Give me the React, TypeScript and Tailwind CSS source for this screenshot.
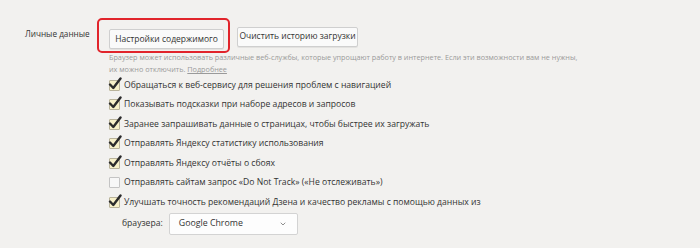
import { ChevronDown } from "lucide-react";

const options = [
  { label: "Обращаться к веб-сервису для решения проблем с навигацией", checked: true },
  { label: "Показывать подсказки при наборе адресов и запросов", checked: true },
  { label: "Заранее запрашивать данные о страницах, чтобы быстрее их загружать", checked: true },
  { label: "Отправлять Яндексу статистику использования", checked: true },
  { label: "Отправлять Яндексу отчёты о сбоях", checked: true },
  { label: "Отправлять сайтам запрос «Do Not Track» («Не отслеживать»)", checked: false },
  { label: "Улучшать точность рекомендаций Дзена и качество рекламы с помощью данных из", checked: true },
];

function Checkbox({ checked }: { checked: boolean }) {
  return (
    <span className="relative w-[11px] h-[11px] shrink-0">
      <span
        className={
          checked
            ? "absolute inset-0 border border-[#b9b39a] bg-[#f7f0c8] rounded-[1px]"
            : "absolute inset-0 border border-[#c4c4c4] bg-[#f7f7f7] rounded-[1px]"
        }
      />
      {checked && (
        <svg viewBox="0 0 14 14" className="absolute -left-[1px] -top-[3px] w-[14px] h-[14px]">
          <path d="M2 7.5 L5.3 11 L12.5 1.5" fill="none" stroke="#2b2b2b" strokeWidth="2.4" strokeLinecap="round" strokeLinejoin="round" />
        </svg>
      )}
    </span>
  );
}

export default function App() {
  return (
    <div className="w-[700px] h-[248px] bg-[#f2f1ef] text-[#333] font-['Open_Sans',sans-serif] flex overflow-hidden">
      <div className="w-[109px] shrink-0 pl-[25px] pt-[28px] text-[8.2px] leading-[12px] text-[#333]">Личные данные</div>
      <div className="flex-1 pt-[24px]">
        <div className="flex items-center gap-[13px]">
          <div className="relative">
            <span className="absolute -left-[12px] -top-[6px] -right-[6px] -bottom-[4px] border-2 border-[#e1242b] rounded-[5px]" />
            <button className="h-[20px] w-[115px] bg-[#fafafa] border border-[#cfcfcf] rounded-[2px] text-[8.5px] text-[#333] shadow-[0_1px_0_rgba(0,0,0,0.06)]">
              Настройки содержимого
            </button>
          </div>
          <button className="h-[20px] w-[121px] bg-[#fafafa] border border-[#cfcfcf] rounded-[2px] text-[8.5px] text-[#333] shadow-[0_1px_0_rgba(0,0,0,0.06)]">
            Очистить историю загрузки
          </button>
        </div>
        <div className="mt-[2px] text-[7.25px] leading-[12px] text-[#9a9a9a] w-[500px]">
          Браузер может использовать различные веб-службы, которые упрощают работу в интернете. Если эти возможности вам не нужны,
          <br />
          их можно отключить. <span className="underline">Подробнее</span>
        </div>
        <div className="flex flex-col">
          {options.map((o) => (
            <div key={o.label} className="h-[19.5px] flex items-center gap-[3px] text-[8.6px] text-[#333]">
              <Checkbox checked={o.checked} />
              <span className="ml-[1px]">{o.label}</span>
            </div>
          ))}
        </div>
        <div className="mt-[1px] pl-[13px] flex items-center gap-[6px] text-[8.6px]">
          <span>браузера:</span>
          <div className="w-[129px] h-[22px] bg-[#fdfdfd] border border-[#d3d3d3] rounded-[2px] flex items-center justify-between pl-[9px] pr-[10px] text-[8.8px]">
            <span>Google Chrome</span>
            <ChevronDown className="w-[8px] h-[8px] text-[#777]" strokeWidth={2.5} />
          </div>
        </div>
      </div>
    </div>
  );
}
